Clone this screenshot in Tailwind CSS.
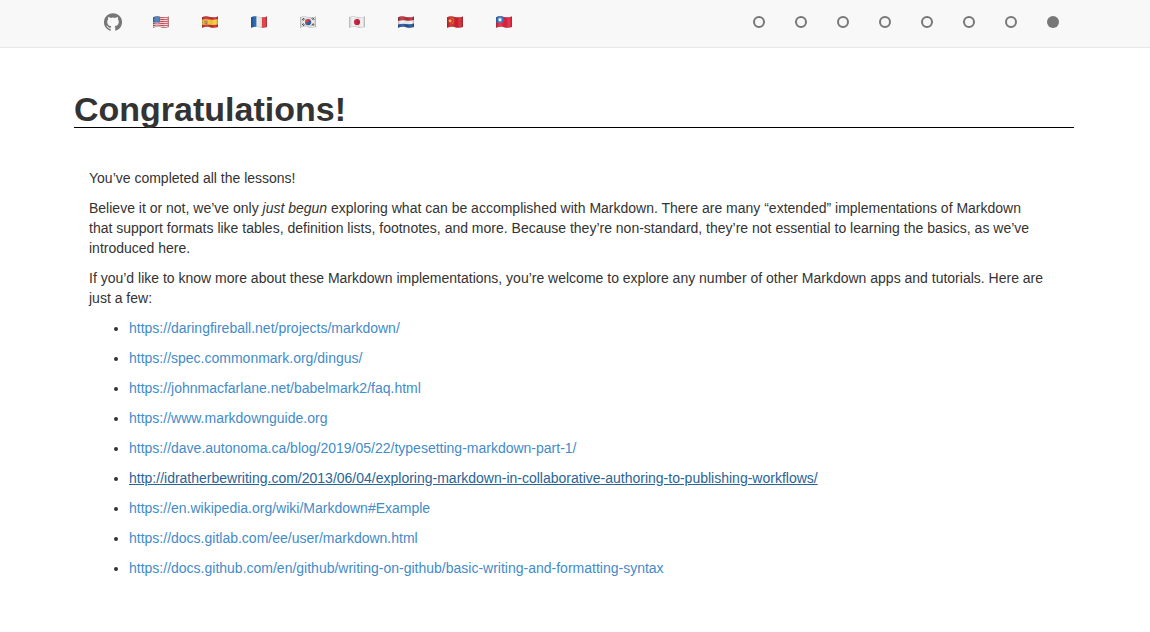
<!DOCTYPE html>
<html lang="en">
<head>
<meta charset="utf-8">
<meta name="viewport" content="width=device-width, initial-scale=1">
<title>Markdown Tutorial</title>
<script src="https://cdn.jsdelivr.net/npm/@tailwindcss/browser@4"></script>
</head>
<body class="bg-white pr-0.5 font-['Helvetica_Neue',Helvetica,'Liberation_Sans',Arial,sans-serif] text-sm leading-5 text-[#333333]">
<svg class="absolute size-0" aria-hidden="true">
  <defs>
    <clipPath id="wave"><path d="M0 1.2C3 0 5 .2 8 .9S13 1.4 16 .4V11C13 12 11 11.9 8 11.2S3 10.7 0 11.8Z"/></clipPath>
    <linearGradient id="shade"><stop offset="0" stop-color="#000" stop-opacity=".18"/><stop offset=".25" stop-color="#fff" stop-opacity=".12"/><stop offset=".6" stop-color="#000" stop-opacity=".08"/><stop offset=".8" stop-color="#fff" stop-opacity=".1"/><stop offset="1" stop-color="#000" stop-opacity=".2"/></linearGradient>
    <g id="cloth"><rect width="16" height="12" fill="url(#shade)"/><path d="M0 1.2C3 0 5 .2 8 .9S13 1.4 16 .4V11C13 12 11 11.9 8 11.2S3 10.7 0 11.8Z" fill="none" stroke="#555" stroke-opacity=".35" stroke-width=".8"/></g>
  </defs>
</svg>
<header class="-mr-0.5 border-b border-[#e7e7e7] bg-[#f8f8f8] pr-0.5">
  <nav class="mx-auto flex h-[47px] max-w-[1000px] items-start justify-between pr-[15px] pl-[30px] pt-3">
    <ul class="flex items-center gap-[33px]">
      <li class="-mr-0.5"><a href="#github" aria-label="GitHub" class="block py-px"><svg class="size-[18px]" viewBox="0 0 16 16" fill="#777"><path d="M8 .2A8 8 0 0 0 5.47 15.8c.4.07.55-.17.55-.38v-1.49c-2.23.48-2.7-.95-2.7-.95-.36-.92-.89-1.17-.89-1.17-.73-.5.05-.49.05-.49.81.06 1.23.83 1.23.83.72 1.23 1.88.87 2.34.66.07-.52.28-.87.51-1.07-1.78-.2-3.65-.89-3.65-3.95 0-.87.31-1.59.82-2.15-.08-.2-.36-1.02.08-2.12 0 0 .67-.21 2.2.82a7.6 7.6 0 0 1 4 0c1.53-1.03 2.2-.82 2.2-.82.44 1.1.16 1.92.08 2.12.51.56.82 1.28.82 2.15 0 3.07-1.87 3.75-3.66 3.95.29.25.54.73.54 1.48v2.2c0 .21.15.46.55.38A8 8 0 0 0 8 .2Z"/></svg></a></li>
      <li><a href="#en" aria-label="English" class="block"><svg class="h-3 w-4" viewBox="0 0 16 12"><g clip-path="url(#wave)"><path fill="#f2eeee" d="M0 0h16v12H0z"/><path d="M0 1.6Q4 .6 8 1.4T16 1M0 3.6Q4 2.6 8 3.4T16 3M0 5.6Q4 4.6 8 5.4T16 5M0 7.6Q4 6.6 8 7.4T16 7M0 9.6Q4 8.6 8 9.4T16 9M0 11.6Q4 10.6 8 11.4T16 11" fill="none" stroke="#d5434e" stroke-width="1"/><path fill="#3974b6" d="M0 0h7v6.6H0z"/><path d="M1 2h5.5M1 4h5.5" stroke="#a5c3e5" stroke-width=".5" stroke-dasharray=".5 .8"/><use href="#cloth"/></g></svg></a></li>
      <li><a href="#es" aria-label="Español" class="block"><svg class="h-3 w-4" viewBox="0 0 16 12"><g clip-path="url(#wave)"><path fill="#cf2830" d="M0 0h16v12H0z"/><path fill="#f9cd3c" d="M0 3.5Q4 2.8 8 3.5T16 3V8.5Q12 9.3 8 8.7T0 9Z"/><path fill="#ae5a35" d="M2.5 4.5h3v3.3l-1.5 1-1.5-1Z"/><path fill="#cba98b" d="M3.5 5.2h1v2h-1z"/><use href="#cloth"/></g></svg></a></li>
      <li><a href="#fr" aria-label="Français" class="block"><svg class="h-3 w-4" viewBox="0 0 16 12"><g clip-path="url(#wave)"><path fill="#f7f7f7" d="M0 0h16v12H0z"/><path fill="#185ba8" d="M0 0h5.4v12H0z"/><path fill="#e83339" d="M10.9 0H16v12h-5.1z"/><use href="#cloth"/></g></svg></a></li>
      <li><a href="#ko" aria-label="한국어" class="block"><svg class="h-3 w-4" viewBox="0 0 16 12"><g clip-path="url(#wave)"><path fill="#ededed" d="M0 0h16v12H0z"/><circle cx="8" cy="6" r="3.1" fill="#d63b47"/><path fill="#2768aa" d="M5.1 7A3.1 3.1 0 0 0 11 5C9.7 4.5 9 5 8 6S6.3 7.5 5.1 7Z"/><path d="m2.2 4 1.7-2M3.2 4.7l1.5-2M11.7 2.2l1.7 2M12.7 1.5l1.5 2M2.2 8l1.7 2M3.2 7.3l1.5 2M11.7 9.3l1.7-2M12.7 10l1.5-2" stroke="#3c3c3c" stroke-width="1"/><use href="#cloth"/></g></svg></a></li>
      <li><a href="#ja" aria-label="日本語" class="block"><svg class="h-3 w-4" viewBox="0 0 16 12"><g clip-path="url(#wave)"><path fill="#f1f1f1" d="M0 0h16v12H0z"/><circle cx="8" cy="6" r="3.1" fill="#cb1d43"/><use href="#cloth"/></g></svg></a></li>
      <li><a href="#nl" aria-label="Nederlands" class="block"><svg class="h-3 w-4" viewBox="0 0 16 12"><g clip-path="url(#wave)"><path fill="#f5f5f5" d="M0 0h16v12H0z"/><path fill="#b92c36" d="M0 0h16v4.1Q12 5 8 4.4T0 4.9Z"/><path fill="#24539c" d="M0 8.4Q4 7.4 8 8T16 7.6V12H0Z"/><use href="#cloth"/></g></svg></a></li>
      <li><a href="#zh-cn" aria-label="简体中文" class="block"><svg class="h-3 w-4" viewBox="0 0 16 12"><g clip-path="url(#wave)"><path fill="#d3202d" d="M0 0h16v12H0z"/><path fill="#f6c62f" d="m3 2.6.6 1.3 1.4.1-1 1 .3 1.4L3 5.7l-1.3.7L2 5 1 4l1.4-.1Z"/><path fill="#e6a42f" d="M5.2 1.8h1v1h-1zM6.2 3.3h1v1h-1zM6.2 5.2h1v1h-1zM5.2 6.7h1v1h-1z"/><use href="#cloth"/></g></svg></a></li>
      <li><a href="#zh-tw" aria-label="繁體中文" class="block"><svg class="h-3 w-4" viewBox="0 0 16 12"><g clip-path="url(#wave)"><path fill="#e5213f" d="M0 0h16v12H0z"/><path fill="#2374c4" d="M0 0h7.8v6.6H0z"/><circle cx="4" cy="3.8" r="1.3" fill="#fff"/><path d="M4 1.7v4.2M1.9 3.8h4.2M2.5 2.3l3 3M2.5 5.3l3-3" stroke="#fff" stroke-width=".5"/><use href="#cloth"/></g></svg></a></li>
    </ul>
    <ol class="flex h-5 items-center gap-[30px]">
      <li><a href="#1" aria-label="Lesson 1" class="block size-3 rounded-full border-2 border-[#777]"></a></li>
      <li><a href="#2" aria-label="Lesson 2" class="block size-3 rounded-full border-2 border-[#777]"></a></li>
      <li><a href="#3" aria-label="Lesson 3" class="block size-3 rounded-full border-2 border-[#777]"></a></li>
      <li><a href="#4" aria-label="Lesson 4" class="block size-3 rounded-full border-2 border-[#777]"></a></li>
      <li><a href="#5" aria-label="Lesson 5" class="block size-3 rounded-full border-2 border-[#777]"></a></li>
      <li><a href="#6" aria-label="Lesson 6" class="block size-3 rounded-full border-2 border-[#777]"></a></li>
      <li><a href="#7" aria-label="Lesson 7" class="block size-3 rounded-full border-2 border-[#777]"></a></li>
      <li><a href="#8" aria-label="Congratulations" aria-current="page" class="block size-3 rounded-full bg-[#777]"></a></li>
    </ol>
  </nav>
</header>
<main class="mx-auto max-w-[1000px] pt-10">
  <h1 class="mb-10 h-10 border-b border-black text-[34px] leading-[42px] font-bold">Congratulations!</h1>
  <div class="space-y-2.5 px-[15px]">
    <p>You’ve completed all the lessons!</p>
    <p>Believe it or not, we’ve only <em>just begun</em> exploring what can be accomplished with Markdown. There are many “extended” implementations of Markdown that&nbsp;support formats like tables, definition lists, footnotes, and more. Because they’re non-standard, they’re not essential to learning the basics, as we’ve introduced here.</p>
    <p>If you’d like to know more about these Markdown implementations, you’re welcome to explore any number of other Markdown apps and tutorials. Here are just a few:</p>
    <ul class="list-disc space-y-2.5 pl-10">
      <li><a class="text-[#428bca]" href="https://daringfireball.net/projects/markdown/">https://daringfireball.net/projects/markdown/</a></li>
      <li><a class="text-[#428bca]" href="https://spec.commonmark.org/dingus/">https://spec.commonmark.org/dingus/</a></li>
      <li><a class="text-[#428bca]" href="https://johnmacfarlane.net/babelmark2/faq.html">https://johnmacfarlane.net/babelmark2/faq.html</a></li>
      <li><a class="text-[#428bca]" href="https://www.markdownguide.org">https://www.markdownguide.org</a></li>
      <li><a class="text-[#428bca]" href="https://dave.autonoma.ca/blog/2019/05/22/typesetting-markdown-part-1/">https://dave.autonoma.ca/blog/2019/05/22/typesetting-markdown-part-1/</a></li>
      <li><a class="text-[#2a6496] underline" href="http://idratherbewriting.com/2013/06/04/exploring-markdown-in-collaborative-authoring-to-publishing-workflows/">http://idratherbewriting.com/2013/06/04/exploring-markdown-in-collaborative-authoring-to-publishing-workflows/</a></li>
      <li><a class="text-[#428bca]" href="https://en.wikipedia.org/wiki/Markdown#Example">https://en.wikipedia.org/wiki/Markdown#Example</a></li>
      <li><a class="text-[#428bca]" href="https://docs.gitlab.com/ee/user/markdown.html">https://docs.gitlab.com/ee/user/markdown.html</a></li>
      <li><a class="text-[#428bca]" href="https://docs.github.com/en/github/writing-on-github/basic-writing-and-formatting-syntax">https://docs.github.com/en/github/writing-on-github/basic-writing-and-formatting-syntax</a></li>
    </ul>
  </div>
</main>
</body>
</html>
